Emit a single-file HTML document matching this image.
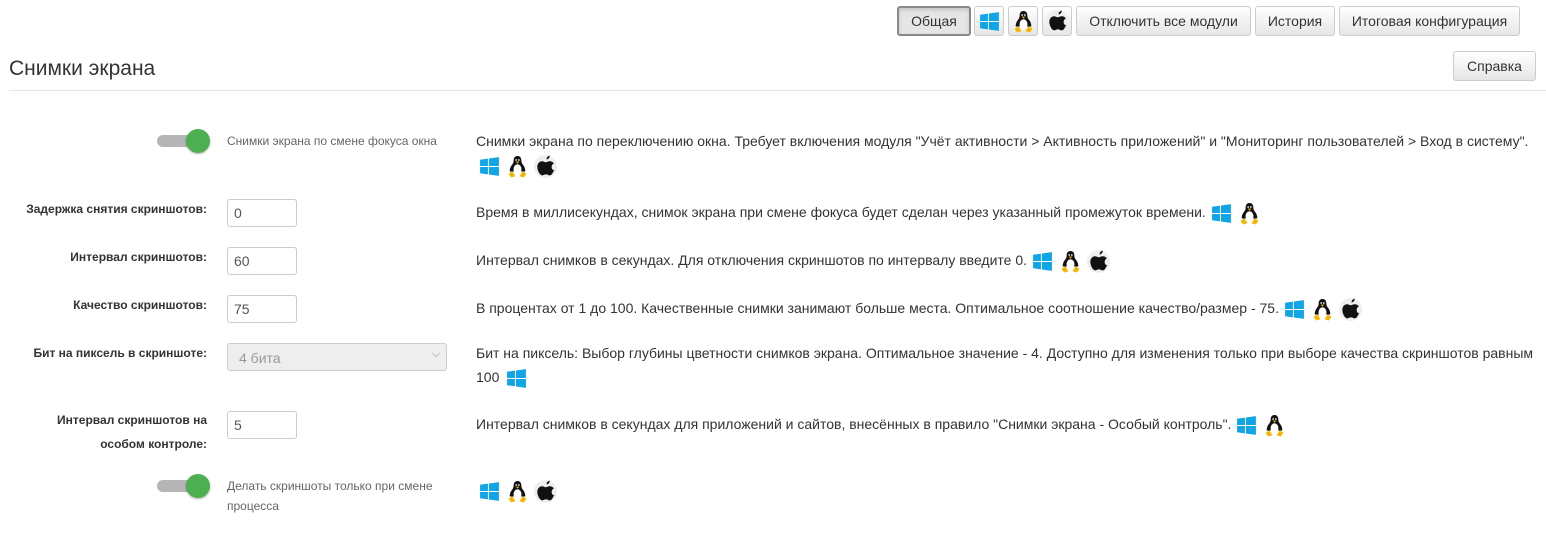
<!DOCTYPE html>
<html><head><meta charset="utf-8">
<style>
*{box-sizing:border-box}
body{margin:0;width:1546px;height:544px;background:#fff;font-family:"Liberation Sans",sans-serif;color:#333;position:relative;overflow:hidden}
.a{position:absolute}
.btn{position:absolute;height:30px;border:1px solid #ccc;border-radius:3px;background:linear-gradient(#fff,#e6e6e6);font-size:14px;color:#333;display:flex;align-items:center;justify-content:center}
.act{border:2px solid #8a8a8a;background:#e6e6e6;box-shadow:inset 0 2px 4px rgba(0,0,0,.15)}
.lbl{position:absolute;right:1339px;font-size:12px;font-weight:bold;text-align:right;line-height:24px;color:#333}
.inp{position:absolute;left:227px;width:70px;height:28px;border:1px solid #ccc;border-radius:3px;font-size:14px;padding:6px 6px;color:#555}
.d{position:absolute;left:476px;font-size:14px;line-height:24px;white-space:nowrap}
.tg{position:absolute;left:157px;width:52px;height:26px}
.tg .t{position:absolute;left:0;top:7px;width:40px;height:12px;border-radius:6px;background:#b5b5b5}
.tg .k{position:absolute;left:29px;top:1px;width:24px;height:24px;border-radius:50%;background:#4caf50;box-shadow:0 1px 2px rgba(0,0,0,.3)}
.tl{position:absolute;left:227px;font-size:12px;color:#666;line-height:20px}
svg.i{display:inline-block;vertical-align:middle;width:23px;height:23px;margin-right:5px}
.d br+svg.i{margin-left:2px}
</style></head><body>
<svg width="0" height="0" style="position:absolute">
<symbol id="w" viewBox="0 0 22 22"><path fill="#0fa5e6" d="M2 4.5l7.5-1v7H2zM10.5 3.3L20 2v8.5h-9.5zM2 11.5h7.5v7L2 17.5zM10.5 11.5H20V20l-9.5-1.3z"/></symbol>
<symbol id="l" viewBox="0 0 22 22"><path fill="#111" d="M11 1c-2.8 0-3.7 2.2-3.7 4.5 0 1.6-.6 2.7-1.700 4.100-1.300 1.700-2.200 3.800-2 6.200h14.800c.2-2.400-.7-4.500-2-6.200-1.100-1.400-1.700-2.500-1.700-4.100C14.700 3.200 13.800 1 11 1z"/><ellipse cx="11" cy="13.8" rx="3.8" ry="5" fill="#fff"/><circle cx="9.7" cy="4.8" r=".8" fill="#fff"/><circle cx="12.3" cy="4.8" r=".8" fill="#fff"/><path fill="#f5b400" d="M9.2 6.3h3.6L11 8.3zM2.5 18l3.5-2.5 3 4.8-4 1.2zM19.5 18L16 15.5l-3 4.8 4 1.2z"/></symbol>
<symbol id="p" viewBox="0 0 22 22"><circle cx="11" cy="11" r="11" fill="#eee"/><g transform="translate(11 11) scale(1.35) translate(-11 -11.2)"><path fill="#111" d="M14 3.5c.1 1.2-.9 2.6-2.2 2.7-.2-1.2.9-2.5 2.2-2.7zM16.8 14.3c-.6 1.4-1.5 3.2-2.8 3.2-1.1 0-1.4-.7-2.7-.7s-1.7.7-2.7.7C7.2 17.5 5.2 14.4 5.2 11.5c0-2.6 1.7-4 3.3-4 1.1 0 1.9.7 2.7.7.8 0 1.7-.8 2.9-.7.5 0 1.9.2 2.8 1.5-2.4 1.5-2 4.6.9 5.3z"/></g></symbol>
</svg>

<div class="btn act" style="left:897px;top:6px;width:74px">Общая</div>
<div class="btn" style="left:974px;top:6px;width:30px"><svg class="i" style="margin:0"><use href="#w"/></svg></div>
<div class="btn" style="left:1008px;top:6px;width:30px"><svg class="i" style="margin:0"><use href="#l"/></svg></div>
<div class="btn" style="left:1042px;top:6px;width:30px"><svg class="i" style="margin:0"><use href="#p"/></svg></div>
<div class="btn" style="left:1076px;top:6px;width:175px">Отключить все модули</div>
<div class="btn" style="left:1255px;top:6px;width:80px">История</div>
<div class="btn" style="left:1339px;top:6px;width:181px">Итоговая конфигурация</div>
<div class="btn" style="left:1453px;top:51px;width:83px">Справка</div>
<div class="a" style="left:9px;top:57px;font-size:21px;color:#333">Снимки экрана</div>
<div class="a" style="left:9px;top:90px;width:1537px;height:1px;background:#e5e5e5"></div>

<div class="tg" style="top:128px"><div class="t"></div><div class="k"></div></div>
<div class="tl" style="top:131px">Снимки экрана по смене фокуса окна</div>
<div class="d" style="top:129px">Снимки экрана по переключению окна. Требует включения модуля "Учёт активности &gt; Активность приложений" и "Мониторинг пользователей &gt; Вход в систему".<br><svg class="i"><use href="#w"/></svg><svg class="i"><use href="#l"/></svg><svg class="i"><use href="#p"/></svg></div>

<div class="lbl" style="top:197px">Задержка снятия скриншотов:</div>
<input class="inp" style="top:199px" value="0">
<div class="d" style="top:200px">Время в миллисекундах, снимок экрана при смене фокуса будет сделан через указанный промежуток времени. <svg class="i"><use href="#w"/></svg><svg class="i"><use href="#l"/></svg></div>

<div class="lbl" style="top:245px">Интервал скриншотов:</div>
<input class="inp" style="top:247px" value="60">
<div class="d" style="top:248px">Интервал снимков в секундах. Для отключения скриншотов по интервалу введите 0. <svg class="i"><use href="#w"/></svg><svg class="i"><use href="#l"/></svg><svg class="i"><use href="#p"/></svg></div>

<div class="lbl" style="top:293px">Качество скриншотов:</div>
<input class="inp" style="top:295px" value="75">
<div class="d" style="top:296px">В процентах от 1 до 100. Качественные снимки занимают больше места. Оптимальное соотношение качество/размер - 75. <svg class="i"><use href="#w"/></svg><svg class="i"><use href="#l"/></svg><svg class="i"><use href="#p"/></svg></div>

<div class="lbl" style="top:341px">Бит на пиксель в скриншоте:</div>
<div class="a" style="left:227px;top:343px;width:220px;height:28px;border:1px solid #ccc;border-radius:3px;background:#eee;color:#999;font-size:14px;padding:6px 0 0 11px">4 бита<span style="position:absolute;right:6px;top:4px;font-size:11px;color:#888">&#x2335;</span></div>
<div class="d" style="top:341px;line-height:24px">Бит на пиксель: Выбор глубины цветности снимков экрана. Оптимальное значение - 4. Доступно для изменения только при выборе качества скриншотов равным<br>100 <svg class="i"><use href="#w"/></svg></div>

<div class="lbl" style="top:408px">Интервал скриншотов на<br>особом контроле:</div>
<input class="inp" style="top:411px" value="5">
<div class="d" style="top:412px">Интервал снимков в секундах для приложений и сайтов, внесённых в правило "Снимки экрана - Особый контроль". <svg class="i"><use href="#w"/></svg><svg class="i"><use href="#l"/></svg></div>

<div class="tg" style="top:473px"><div class="t"></div><div class="k"></div></div>
<div class="tl" style="top:476px">Делать скриншоты только при смене<br>процесса</div>
<div class="d" style="top:478px;left:478px"><svg class="i"><use href="#w"/></svg><svg class="i"><use href="#l"/></svg><svg class="i"><use href="#p"/></svg></div>
</body></html>
